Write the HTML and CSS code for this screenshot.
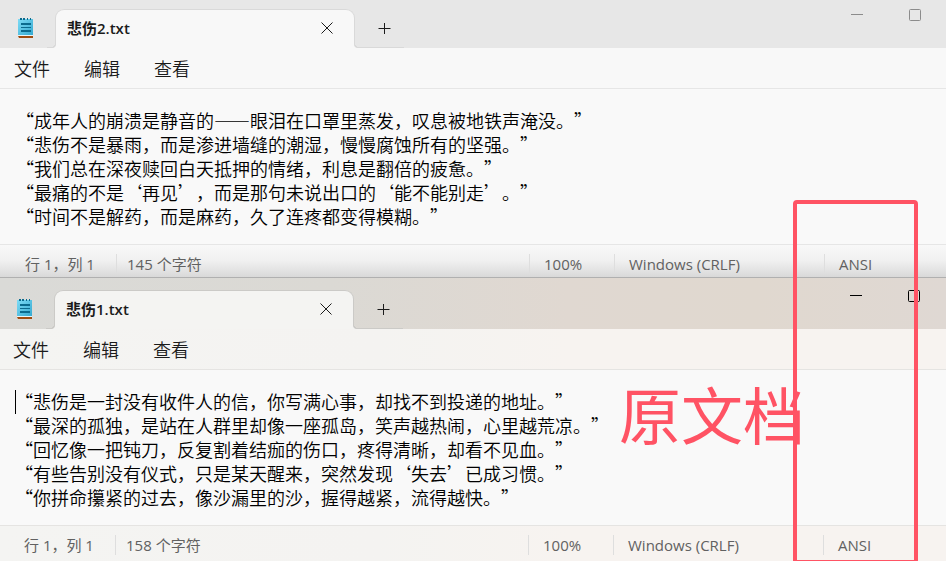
FILE: index.html
```html
<!DOCTYPE html>
<html lang="zh-CN">
<head>
<meta charset="utf-8">
<title>记事本</title>
<link rel="stylesheet" href="styles.css">
</head>
<body>
<svg class="defs" aria-hidden="true">
  <defs>
    <linearGradient id="page" x1="0" y1="0" x2="1" y2="1">
      <stop offset="0" stop-color="#7edcf6"/>
      <stop offset="1" stop-color="#35a9d0"/>
    </linearGradient>
  </defs>
  <symbol id="notepad" viewBox="0 0 16 21">
    <path fill="#a04c10" d="M0 18h15v2H1z"/>
    <path fill="#e8f6fa" d="M0 17h15v1H0z"/>
    <path fill="url(#page)" d="M0 1h15v16H0z"/>
    <path fill="#0b6b8e" d="M2 0h2v2H2zM5 0h2v2H5zM9 0h1v2H9zM12 0h1v2h-1zM3 5h10v2H3zM3 9h10v1H3zM3 12h10v2H3z"/>
  </symbol>
  <symbol id="close" viewBox="0 0 12 12">
    <path fill="none" stroke="currentColor" d="M.5.5l11 11M11.5.5l-11 11"/>
  </symbol>
  <symbol id="plus" viewBox="0 0 13 13">
    <path fill="none" stroke="currentColor" d="M6.500 1v11M.5 6.500h12"/>
  </symbol>
  <symbol id="minimize" viewBox="0 0 12 12">
    <path fill="none" stroke="currentColor" d="M0 5.500h12"/>
  </symbol>
  <symbol id="maximize" viewBox="0 0 12 12">
    <rect x=".5" y=".5" width="11" height="11" rx="1" fill="none" stroke="currentColor"/>
  </symbol>
</svg>

<main class="desktop">
  <section class="window back" aria-label="悲伤2.txt">
    <header class="titlebar">
      <svg class="app-icon" aria-hidden="true"><use href="#notepad"/></svg>
      <div class="tab">
        <span class="tab-title">悲伤2.txt</span>
        <button class="icon-button" type="button" aria-label="关闭标签页"><svg class="icon-close"><use href="#close"/></svg></button>
      </div>
      <button class="icon-button new-tab" type="button" aria-label="新建标签页"><svg class="icon-plus"><use href="#plus"/></svg></button>
      <div class="window-controls">
        <button class="icon-button" type="button" aria-label="最小化"><svg class="icon-window"><use href="#minimize"/></svg></button>
        <button class="icon-button" type="button" aria-label="最大化"><svg class="icon-window"><use href="#maximize"/></svg></button>
      </div>
    </header>
    <nav class="menu">
      <button type="button">文件</button>
      <button type="button">编辑</button>
      <button type="button">查看</button>
    </nav>
    <div class="editor">
      <textarea rows="5" wrap="off" spellcheck="false" aria-label="悲伤2.txt 内容">“成年人的崩溃是静音的——眼泪在口罩里蒸发，叹息被地铁声淹没。”
“悲伤不是暴雨，而是渗进墙缝的潮湿，慢慢腐蚀所有的坚强。”
“我们总在深夜赎回白天抵押的情绪，利息是翻倍的疲惫。”
“最痛的不是‘再见’，而是那句未说出口的‘能不能别走’。”
“时间不是解药，而是麻药，久了连疼都变得模糊。”</textarea>
    </div>
    <footer class="status">
      <span>行 1，列 1</span>
      <span>145 个字符</span>
      <span>100%</span>
      <span>Windows (CRLF)</span>
      <span>ANSI</span>
    </footer>
  </section>

  <section class="window front" aria-label="悲伤1.txt">
    <header class="titlebar">
      <svg class="app-icon" aria-hidden="true"><use href="#notepad"/></svg>
      <div class="tab">
        <span class="tab-title">悲伤1.txt</span>
        <button class="icon-button" type="button" aria-label="关闭标签页"><svg class="icon-close"><use href="#close"/></svg></button>
      </div>
      <button class="icon-button new-tab" type="button" aria-label="新建标签页"><svg class="icon-plus"><use href="#plus"/></svg></button>
      <div class="window-controls">
        <button class="icon-button" type="button" aria-label="最小化"><svg class="icon-window"><use href="#minimize"/></svg></button>
        <button class="icon-button" type="button" aria-label="最大化"><svg class="icon-window"><use href="#maximize"/></svg></button>
      </div>
    </header>
    <nav class="menu">
      <button type="button">文件</button>
      <button type="button">编辑</button>
      <button type="button">查看</button>
    </nav>
    <div class="editor">
      <span class="caret"></span>
      <textarea rows="5" wrap="off" spellcheck="false" aria-label="悲伤1.txt 内容">“悲伤是一封没有收件人的信，你写满心事，却找不到投递的地址。”
“最深的孤独，是站在人群里却像一座孤岛，笑声越热闹，心里越荒凉。”
“回忆像一把钝刀，反复割着结痂的伤口，疼得清晰，却看不见血。”
“有些告别没有仪式，只是某天醒来，突然发现‘失去’已成习惯。”
“你拼命攥紧的过去，像沙漏里的沙，握得越紧，流得越快。”</textarea>
    </div>
    <footer class="status">
      <span>行 1，列 1</span>
      <span>158 个字符</span>
      <span>100%</span>
      <span>Windows (CRLF)</span>
      <span>ANSI</span>
    </footer>
  </section>

  <div class="mark-box"></div>
  <p class="mark-text">原文档</p>
</main>
</body>
</html>
```
FILE: styles.css
```css
* {
  box-sizing: border-box;
}

body {
  margin: 0;
  overflow: hidden;
  background: #f9f9f9;
  color: #1b1b1b;
  font-family: "Open Sans", "Noto Sans CJK SC", sans-serif;
}

button {
  padding: 0;
  border: 0;
  background: none;
  color: inherit;
  font: inherit;
}

svg {
  display: block;
}

.defs {
  position: absolute;
  width: 0;
  height: 0;
}

.desktop {
  position: relative;
  display: flex;
  flex-direction: column;
  min-height: 100vh;
}

.window {
  --bar: #e7e7e7;
  --surface: #f8f8f8;
  --tab: #f8f8f8;
  --edge: #d9d9d9;
  --line: #e6e6e6;
}

.front {
  --bar: linear-gradient(90deg, #dadad7 0%, #dbd9d4 35%, #e0d8d1 60%, #e0d8cf 80%, #dfd8d3 100%);
  --surface: linear-gradient(90deg, #f4f4f2 0%, #f4f3f1 40%, #f7f3f0 60%, #f7f3f0 100%);
  --tab: #f4f4f2;
  --edge: #cbcac7;
  --line: #e5e4e2;
  display: flex;
  flex: 1;
  flex-direction: column;
  margin-left: -1px;
  border-top: 1px solid #b0b0b0;
}

/* Title bar */

.titlebar {
  display: flex;
  align-items: flex-start;
  padding: 9px 25px 0 18px;
  background: var(--bar);
}

.front .titlebar {
  padding-top: 12px;
  padding-right: 26px;
}

.app-icon {
  width: 16px;
  height: 21px;
  margin-top: 9px;
}

.tab {
  position: relative;
  display: flex;
  align-items: center;
  justify-content: space-between;
  width: 300px;
  height: 39px;
  margin-left: 21px;
  padding: 0 21px 2px 11px;
  border: 1px solid var(--edge);
  border-bottom: 0;
  border-radius: 9px 9px 0 0;
  background: var(--tab);
}

.tab::before,
.tab::after {
  content: "";
  position: absolute;
  bottom: 0;
  height: 5px;
}

.tab::before {
  right: 100%;
  width: 9px;
  background:
    radial-gradient(circle at 0 0, transparent 4px, var(--edge) 4px, var(--edge) 5px, var(--tab) 6px) right / 5px 5px no-repeat,
    linear-gradient(var(--edge), var(--edge)) bottom left / 5px 1px no-repeat;
}

.tab::after {
  left: 100%;
  width: 50px;
  background:
    radial-gradient(circle at 100% 0, transparent 4px, var(--edge) 4px, var(--edge) 5px, var(--tab) 6px) left / 5px 5px no-repeat,
    linear-gradient(var(--edge), var(--edge)) bottom right / 45px 1px no-repeat;
}

.tab-title {
  font-size: 15px;
  font-weight: 600;
  line-height: 20px;
}

.icon-button {
  display: block;
}

.icon-close {
  width: 12px;
  height: 12px;
}

.new-tab {
  margin: 13px 0 0 23px;
}

.icon-plus {
  width: 13px;
  height: 13px;
}

.window-controls {
  display: flex;
  gap: 46px;
  margin-left: auto;
}

.icon-window {
  width: 12px;
  height: 12px;
}

.back .window-controls {
  color: #8c8c8c;
}

.front .window-controls {
  color: #000;
}

/* Menu */

.menu {
  display: flex;
  gap: 34px;
  height: 41px;
  padding: 0 14px;
  border-bottom: 1px solid var(--line);
  background: var(--surface);
  font-size: 18px;
  font-weight: 350;
}

/* Text area */

.editor {
  position: relative;
  padding: 19px 16px 16px;
  background: #f9f9f9;
}

.editor textarea {
  display: block;
  width: 100%;
  height: 120px;
  padding: 0;
  border: 0;
  outline: 0;
  resize: none;
  overflow: hidden;
  background: none;
  color: #000;
  font: 350 18px/24px "Noto Sans CJK SC", sans-serif;
  text-spacing-trim: space-all;
}

.caret {
  position: absolute;
  top: 20px;
  width: 1px;
  height: 24px;
  background: #000;
}

/* Status bar */

.status {
  display: grid;
  grid-template-columns: 116px 1fr 85px 210px 122px;
  align-items: start;
  height: 33px;
  padding-top: 9px;
  border-top: 1px solid var(--line);
  background: linear-gradient(#f8f8f8, #f0f0f0 50%, #d9d9d9);
  color: #616161;
  font-size: 15px;
  line-height: 20px;
  white-space: nowrap;
}

.front .status {
  flex: 1;
  grid-template-columns: 116px 1fr 85px 210px 123px;
  background: var(--surface);
}

.status span {
  height: 20px;
  padding-left: 14px;
  border-left: 1px solid #dedede;
}

.status span:first-child {
  padding-left: 25px;
  border-left: 0;
}

.status span:nth-child(2) {
  padding-left: 10px;
}

/* Markup over both windows */

.mark-box {
  position: absolute;
  top: 200px;
  right: 28px;
  bottom: -3px;
  width: 125px;
  border: 4px solid #ff5364;
  border-radius: 4px;
}

.mark-text {
  position: absolute;
  top: 378px;
  right: 141px;
  margin: 0;
  color: #ff5364;
  font: 62px/70px "Noto Sans CJK SC", sans-serif;
}
```
